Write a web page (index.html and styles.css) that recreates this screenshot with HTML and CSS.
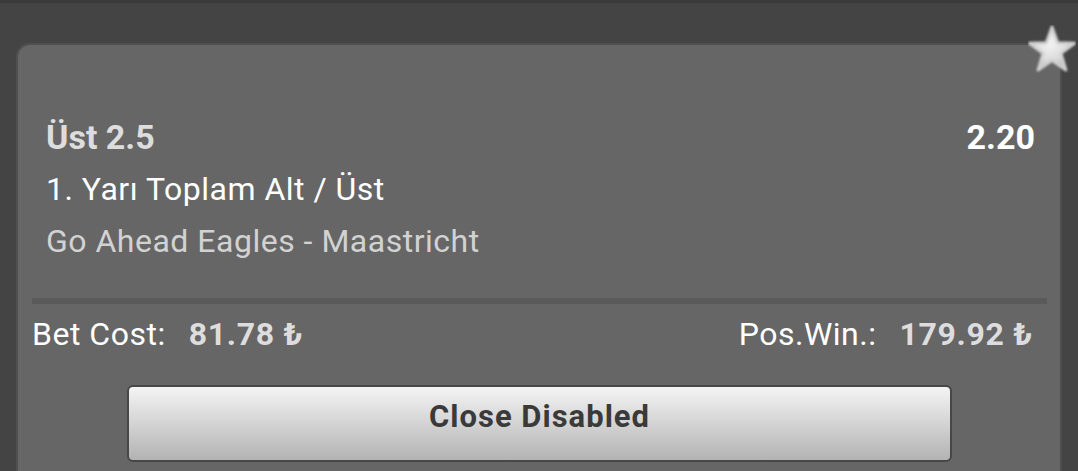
FILE: index.html
```html
<!DOCTYPE html>
<html>
	<head>
		<meta charset="utf-8">
		<title>Bet Slip</title>
		<link rel="stylesheet" href="styles.css">
	</head>
	<body>
		<div class="page">
			<div class="card">
				<div class="selection">
					<div class="sel-top">
						<span class="sel-name">Üst 2.5</span>
						<span class="sel-odd">2.20</span>
					</div>
					<div class="sel-market">1. Yarı Toplam Alt / Üst</div>
					<div class="sel-event">Go Ahead Eagles - Maastricht</div>
				</div>
				<div class="divider"></div>
				<div class="totals">
					<div class="total">
						<span class="total-label">Bet Cost:</span>
						<span class="total-value">81.78 ₺</span>
					</div>
					<div class="total">
						<span class="total-label">Pos.Win.:</span>
						<span class="total-value">179.92 ₺</span>
					</div>
				</div>
				<button class="close-btn">Close Disabled</button>
			</div>
			<!-- favourite star -->
			<svg class="fav-star" viewBox="0 0 100 100">
				<defs>
					<radialGradient id="starFill" cx="45%" cy="40%" r="60%">
						<stop offset="0" stop-color="#f2f2f2"/>
						<stop offset="0.6" stop-color="#dcdcdc"/>
						<stop offset="1" stop-color="#b8b8b8"/>
					</radialGradient>
					<filter id="soft" x="-10%" y="-10%" width="120%" height="120%">
						<feGaussianBlur stdDeviation="1.8"/>
					</filter>
				</defs>
				<polygon points="50,4 62,37 97,38 69,59 79,94 50,74 21,94 31,59 3,38 38,37" fill="url(#starFill)" stroke="#cfcfcf" stroke-width="6" stroke-linejoin="round" filter="url(#soft)"/>
			</svg>
		</div>
	</body>
</html>
```

FILE: styles.css
```css
html, body {margin: 0; padding: 0;}
body {
	background: #444444;
	font-family: Roboto, "Liberation Sans", sans-serif;
	height: 100vh;
	overflow: hidden;
}
.page {
	position: relative;
	border-top: 3px solid #3b3b3b;
	padding: 40px 16px 0;
}
.card {
	background: #666666;
	border: 2px solid #4f4f4f;
	border-bottom: none;
	border-radius: 14px 14px 0 0;
	padding: 66px 0 30px;
}
.selection {padding: 0 25px 0 28px;}
.sel-top {
	display: flex;
	justify-content: space-between;
	font-weight: bold;
	font-size: 34px;
	line-height: 52px;
}
.sel-name {color: #dddddd;}
.sel-odd {color: #ffffff;}
.sel-market {
	color: #ffffff;
	font-size: 32px;
	letter-spacing: 0.5px;
	line-height: 52px;
}
.sel-event {
	color: #d2d2d2;
	font-size: 32px;
	letter-spacing: 0.5px;
	line-height: 52px;
}
.divider {
	height: 6px;
	background: #5a5a5a;
	margin: 31px 13px 0 14px;
}
.totals {
	display: flex;
	justify-content: space-between;
	margin: 8px 27px 0 14px;
	font-size: 32px;
	letter-spacing: 0.5px;
	line-height: 44px;
}
.total {display: flex; gap: 23px;}
.total-label {color: #ffffff;}
.total-value {color: #dddddd; font-weight: bold; letter-spacing: 0.7px;}
.close-btn {
	display: block;
	box-sizing: border-box;
	width: calc(100% - 217px);
	height: 77px;
	margin: 29px 108px 0 109px;
	padding: 0 0 14px;
	border: 2px solid #474747;
	border-radius: 6px;
	background: linear-gradient(#f4f4f4, #b3b3b3);
	font-family: Roboto, "Liberation Sans", sans-serif;
	font-weight: bold;
	font-size: 31px;
	letter-spacing: 1px;
	line-height: 59px;
	color: #3a3a3a;
}
.fav-star {
	position: absolute;
	left: 1028px;
	top: 22px;
	width: 48px;
	height: 48px;
}
```
